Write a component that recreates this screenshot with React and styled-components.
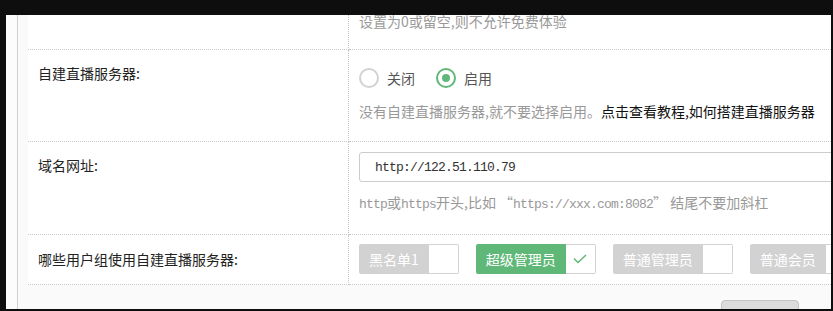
import styled, { createGlobalStyle } from 'styled-components';

const GlobalStyle = createGlobalStyle`
	* {
		box-sizing: border-box;
	}

	html,
	body {
		margin: 0;
		padding: 0;
		background: #0e0e0e;
	}

	body {
		font-family: 'Noto Sans CJK SC', 'Liberation Sans', sans-serif;
		font-size: 14px;
	}
`;

const Screen = styled.div`
	width: 833px;
	height: 311px;
	padding: 15px 2px 2px 6px;
	display: flex;
`;

const Panel = styled.div`
	flex: 1;
	display: flex;
	padding-left: 11px;
	background: #fcfcfc;
	overflow: hidden;
`;

const Content = styled.div`
	flex: 1;
	min-width: 0;
	display: flex;
	flex-direction: column;
	padding-left: 10px;
	border-left: 1px solid #d0d0d0;
	background: #fafafa;
`;

const Table = styled.div`
	margin-top: -4px;
	display: grid;
	grid-template-columns: 321px 1fr;
	background: #fff;
`;

const Label = styled.div`
	padding: ${({ $top }) => $top}px 10px 0;
	border-right: 1px dotted #c8c8c8;
	border-bottom: 1px dotted #c8c8c8;
	color: #222;
	line-height: 20px;
`;

const Field = styled.div`
	min-width: 0;
	padding: ${({ $pad }) => $pad};
	border-bottom: 1px dotted #c8c8c8;
`;

const Hint = styled.div`
	margin-top: ${({ $mt }) => $mt || 0}px;
	color: #999;
	line-height: 20px;
	white-space: nowrap;
`;

const Link = styled.a`
	color: #111;
	text-decoration: none;
`;

const Mono = styled.span`
	font-family: 'Liberation Mono', monospace;
	font-size: 13px;
	letter-spacing: -0.8px;
`;

const RadioGroup = styled.div`
	display: flex;
	align-items: center;
	height: 20px;
`;

const Radio = styled.label`
	display: flex;
	align-items: center;
	gap: 8px;
	margin-right: 21px;
	color: #555;
	line-height: 20px;
`;

const RadioIcon = styled.span`
	width: 20px;
	height: 20px;
	border-radius: 50%;
	border: 2px solid ${({ $on }) => ($on ? '#5fb878' : '#d2d2d2')};
	display: flex;
	align-items: center;
	justify-content: center;

	&::after {
		content: '';
		display: ${({ $on }) => ($on ? 'block' : 'none')};
		width: 8px;
		height: 8px;
		border-radius: 50%;
		background: #5fb878;
	}
`;

const Input = styled.input`
	display: block;
	width: 520px;
	height: 30px;
	padding: 0 15px;
	border: 1px solid #ccc;
	border-radius: 3px;
	background: #fff;
	color: #333;
	font-family: 'Liberation Mono', monospace;
	font-size: 13px;
	letter-spacing: -0.8px;
	outline: none;
`;

const Tags = styled.div`
	display: flex;
	gap: 17px;
`;

const Tag = styled.div`
	display: flex;
	flex-shrink: 0;
	height: 30px;
`;

const TagName = styled.span`
	padding: 0 10px;
	line-height: 30px;
	white-space: nowrap;
	color: #fff;
	background: ${({ $on }) => ($on ? '#5fb878' : '#d2d2d2')};
	border-radius: 2px 0 0 2px;
`;

const TagBox = styled.span`
	width: 30px;
	display: flex;
	align-items: center;
	justify-content: center;
	background: #fff;
	border: 1px solid #d2d2d2;
	border-left: none;
	border-radius: 0 2px 2px 0;
`;

const Footer = styled.div`
	display: flex;
	justify-content: flex-end;
	padding: 15px 32px 0 0;
`;

const Button = styled.button`
	flex-shrink: 0;
	width: 78px;
	height: 36px;
	border: 1px solid #c4c4c4;
	border-radius: 4px;
	background: #dcdcdc;
`;

const groups = [
	{ name: '黑名单1', on: false },
	{ name: '超级管理员', on: true },
	{ name: '普通管理员', on: false },
	{ name: '普通会员', on: false },
];

const CheckMark = () => (
	<svg width='14' height='10' viewBox='0 0 14 10'>
		<path d='M1 4.5 L5 8.5 L13 1' fill='none' stroke='#5fb878' strokeWidth='1.5' />
	</svg>
);

const App = () => {
	return (
		<>
			<GlobalStyle />
			<Screen>
				<Panel>
					<Content>
						<Table>
							<Label $top={0} />
							<Field $pad='0 10px 18px'>
								<Hint>设置为0或留空,则不允许免费体验</Hint>
							</Field>

							<Label $top={13}>自建直播服务器:</Label>
							<Field $pad='18px 10px 20px'>
								<RadioGroup>
									<Radio>
										<RadioIcon />
										关闭
									</Radio>
									<Radio>
										<RadioIcon $on />
										启用
									</Radio>
								</RadioGroup>
								<Hint $mt={13}>
									没有自建直播服务器,就不要选择启用。
									<Link href='#'>点击查看教程,如何搭建直播服务器</Link>
								</Hint>
							</Field>

							<Label $top={13}>域名网址:</Label>
							<Field $pad='10px 10px 19px'>
								<Input defaultValue='http://122.51.110.79' />
								<Hint $mt={10}>
									<Mono>http</Mono>或<Mono>https</Mono>开头,比如{' '}
									“<Mono>https://xxx.com:8082</Mono>” 结尾不要加斜杠
								</Hint>
							</Field>

							<Label $top={14}>哪些用户组使用自建直播服务器:</Label>
							<Field $pad='9px 10px 10px'>
								<Tags>
									{groups.map((g) => (
										<Tag key={g.name}>
											<TagName $on={g.on}>{g.name}</TagName>
											<TagBox>{g.on && <CheckMark />}</TagBox>
										</Tag>
									))}
								</Tags>
							</Field>
						</Table>

						<Footer>
							<Button />
						</Footer>
					</Content>
				</Panel>
			</Screen>
		</>
	);
};

export default App;
